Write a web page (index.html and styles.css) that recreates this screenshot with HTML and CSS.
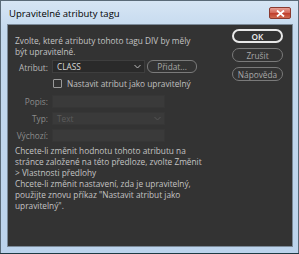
FILE: index.html
```html
<!DOCTYPE html>
<html lang="cs">
<head>
<meta charset="utf-8">
<link rel="stylesheet" href="styles.css">
</head>
<body>
<div class="window">
  <div class="titlebar">
    <span class="title">Upravitelné atributy tagu</span>
    <span class="close"><svg width="9" height="7" viewBox="0 0 9 7"><path d="M1 0.5 L8 6.5 M8 0.5 L1 6.5" stroke="#fff" stroke-width="1.8"/></svg></span>
  </div>
  <div class="panel">
    <div class="main">
      <p class="text intro">Zvolte, které atributy tohoto tagu DIV by měly<br>být upravitelné.</p>
      <div class="form">
        <label class="lbl">Atribut:</label>
        <div class="attr-row">
          <div class="select"><span>CLASS</span><svg width="7" height="5" viewBox="0 0 7 5"><path d="M0.5 1 L3.5 4 L6.5 1" fill="none" stroke="#bbb" stroke-width="1"/></svg></div>
          <div class="btn small">Přidat...</div>
        </div>
        <span></span>
        <div class="check-row"><span class="checkbox"></span><span class="check-lbl">Nastavit atribut jako upravitelný</span></div>
        <label class="lbl dim">Popis:</label>
        <div class="field"></div>
        <label class="lbl dim">Typ:</label>
        <div class="field sel"><span class="ph">Text</span><svg width="7" height="5" viewBox="0 0 7 5"><path d="M0.5 1 L3.5 4 L6.5 1" fill="none" stroke="#555" stroke-width="1"/></svg></div>
        <label class="lbl dim">Výchozí:</label>
        <div class="field"></div>
      </div>
      <p class="text p1">Chcete-li změnit hodnotu tohoto atributu na<br>stránce založené na této předloze, zvolte Změnit<br>&gt; Vlastnosti předlohy</p>
      <p class="text">Chcete-li změnit nastavení, zda je upravitelný,<br>použijte znovu příkaz "Nastavit atribut jako<br>upravitelný".</p>
    </div>
    <div class="buttons">
      <div class="btn default">OK</div>
      <div class="btn">Zrušit</div>
      <div class="btn">Nápověda</div>
    </div>
  </div>
</div>
</body>
</html>
```

FILE: styles.css
```css
html, body {
  margin: 0;
  padding: 0;
  background: #1e3a44;
}
.window {
  width: 299px;
  height: 253px;
  box-sizing: border-box;
  border: 1px solid #5a6a78;
  border-bottom: none;
  background: linear-gradient(to bottom, #d6e5f4 0px, #c4d9ee 30px, #bcd3ec 100%);
  display: flex;
  flex-direction: column;
  font-family: "Open Sans", "Noto Sans", sans-serif;
}
.titlebar {
  height: 23px;
  display: flex;
  align-items: flex-start;
  justify-content: space-between;
  padding: 0 7px 0 8px;
}
.title {
  font-size: 9.5px;
  color: #000;
  margin-top: 6px;
  line-height: 13px;
}
.close {
  margin-top: 6px;
  width: 22px;
  height: 12px;
  box-sizing: border-box;
  border: 1px solid #8a3a30;
  border-radius: 2px;
  background: linear-gradient(to bottom, #e8a096 0%, #d46a5a 45%, #c0402e 55%, #d06a50 100%);
  display: flex;
  align-items: center;
  justify-content: center;
}
.panel {
  margin: 0 5px 6px 6px;
  flex: 1;
  background: #333333;
  border: 1px solid #7b8a99;
  display: grid;
  grid-template-columns: 210px 51px;
  column-gap: 7px;
  padding: 0 10px 0 7px;
}
.text {
  margin: 0;
  font-size: 8.3px;
  line-height: 11px;
  color: #c4c4c4;
  white-space: nowrap;
}
.intro {
  margin-top: 10px;
}
.form {
  margin-top: 3px;
  display: grid;
  grid-template-columns: 33px 1fr;
  column-gap: 4px;
  row-gap: 4px;
  align-items: center;
}
.lbl {
  font-size: 8.3px;
  color: #b8b8b8;
  text-align: right;
  white-space: nowrap;
}
.lbl.dim {
  color: #8c8c8c;
}
.attr-row {
  display: flex;
  gap: 2px;
  height: 13px;
  margin-bottom: 1px;
}
.select {
  width: 93px;
  box-sizing: border-box;
  background: #2a2a2a;
  border: 1px solid #3e3e3e;
  display: flex;
  align-items: center;
  justify-content: space-between;
  padding: 0 3px 0 4px;
  font-size: 8.3px;
  color: #d8d8d8;
}
.btn {
  box-sizing: border-box;
  height: 14px;
  border: 1px solid #7a7a7a;
  border-radius: 7px;
  display: flex;
  align-items: center;
  justify-content: center;
  font-size: 8.3px;
  color: #a8a8a8;
}
.btn.small {
  width: 50px;
  height: 13px;
  border-radius: 6px;
}
.check-row {
  display: flex;
  align-items: center;
  height: 10px;
  margin-left: 1px;
  margin-bottom: 3px;
}
.checkbox {
  width: 9px;
  height: 9px;
  box-sizing: border-box;
  border: 1px solid #9a9a9a;
  border-radius: 1px;
  margin-right: 5px;
}
.check-lbl {
  font-size: 8.3px;
  color: #c0c0c0;
  white-space: nowrap;
}
.field {
  width: 113px;
  height: 13px;
  box-sizing: border-box;
  background: #3a3a3a;
  border: 1px solid #363636;
}
.field.sel {
  display: flex;
  align-items: center;
  justify-content: space-between;
  padding: 0 3px 0 4px;
}
.ph {
  font-size: 8.3px;
  color: #5c5c5c;
}
.p1 {
  margin-top: 3px;
}
.buttons {
  display: flex;
  flex-direction: column;
  gap: 5px;
  margin-top: 4px;
}
.btn.default {
  border: 2px solid #e8e8e8;
  color: #f0f0f0;
  font-weight: 600;
}
```
